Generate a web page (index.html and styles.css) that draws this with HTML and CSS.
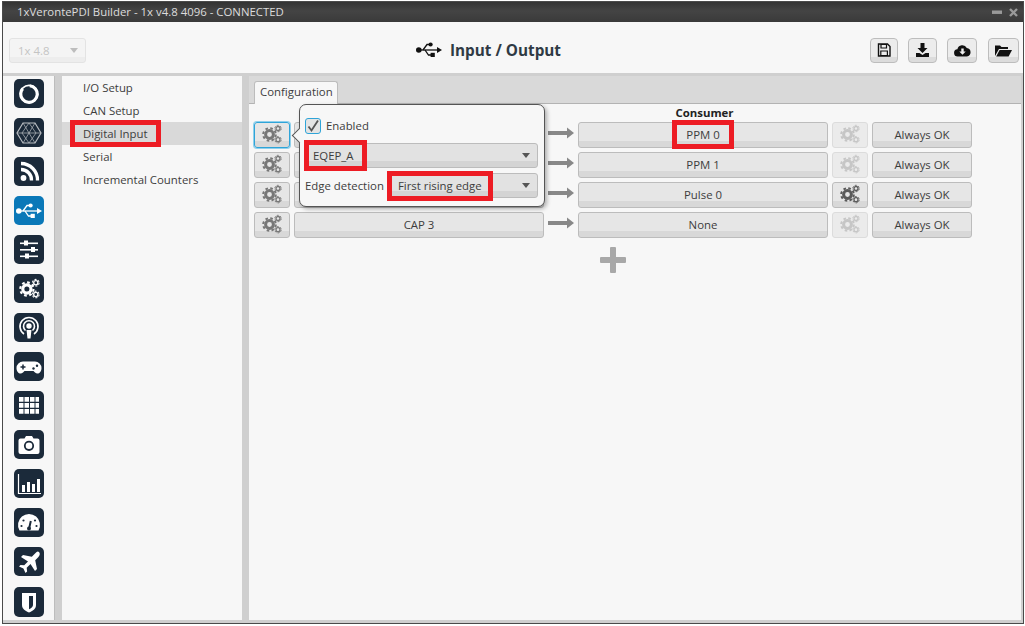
FILE: index.html
```html
<!DOCTYPE html>
<html lang="en">
<head>
<meta charset="utf-8">
<title>1xVerontePDI Builder</title>
<link rel="stylesheet" href="styles.css">
</head>
<body>
<svg class="defs" aria-hidden="true">
  <symbol id="cogs" viewBox="0 0 20 20">
    <g fill="none" stroke="currentColor">
      <circle cx="7.5" cy="10.500" r="3.900" stroke-width="3"/>
      <circle cx="7.5" cy="10.500" r="6.300" stroke-width="2" stroke-dasharray="2.600 2.350"/>
      <circle cx="16" cy="4.500" r="2" stroke-width="1.300"/>
      <circle cx="16" cy="4.500" r="3.200" stroke-width="1" stroke-dasharray="2 1.350"/>
      <circle cx="16" cy="15.700" r="2" stroke-width="1.300"/>
      <circle cx="16" cy="15.700" r="3.200" stroke-width="1" stroke-dasharray="2 1.350"/>
    </g>
  </symbol>
  <symbol id="usb" viewBox="0 0 26 16">
    <circle cx="2.8" cy="8" r="2.8" fill="currentColor"/>
    <path d="M3 8H22" stroke="currentColor" stroke-width="1.3" fill="none"/>
    <path d="M21 5l5 3-5 3z" fill="currentColor"/>
    <path d="M7 8L11 2.5H14M9 8l3.5 5H15" stroke="currentColor" stroke-width="1.3" fill="none"/>
    <circle cx="14.6" cy="2.5" r="2.1" fill="currentColor"/>
    <rect x="14.6" y="10.8" width="4.2" height="4.2" fill="currentColor"/>
  </symbol>
</svg>

<div class="window">
  <div class="titlebar">
    <span class="title-text">1xVerontePDI Builder - 1x v4.8 4096 - CONNECTED</span>
    <span class="win-controls">
      <svg class="win-icon" width="10" height="8" viewBox="0 0 10 8"><rect y="3" width="10" height="2.4"/></svg>
      <svg class="win-icon" width="9" height="9" viewBox="0 0 9 9"><path d="M1 1l7 7M8 1l-7 7" stroke-width="2.4"/></svg>
    </span>
  </div>

  <header class="header">
    <div class="combo"><span>1x 4.8</span><i class="caret caret-light"></i></div>
    <h1 class="page-title">
      <svg class="title-usb"><use href="#usb"/></svg>
      <span>Input / Output</span>
    </h1>
    <div class="tools">
      <button class="tool tool-a"><svg width="14" height="14" viewBox="0 0 14 14"><path d="M1.5 1h9l2.5 2.5V13H1.5z" fill="none" stroke="#111" stroke-width="1.4"/><path d="M4 1.5h5.5v3.5H4zM3.8 8h6.6v4.5H3.8z" fill="none" stroke="#111" stroke-width="1.2"/></svg></button>
      <button class="tool tool-b"><svg width="15" height="14" viewBox="0 0 15 14"><path d="M5.5 0h4v5h3l-5 5-5-5h3z" fill="#111"/><path d="M1 10h3.5l3 2 3-2H14v4H1z" fill="#111"/></svg></button>
      <button class="tool tool-c"><svg width="17" height="13" viewBox="0 0 17 13"><path d="M4 12.5a3.6 3.6 0 0 1-.6-7.2A5 5 0 0 1 12.8 4 4.3 4.3 0 0 1 13 12.5z" fill="#111"/><path d="M7.3 4.5h2.4v3h2l-3.2 3.3-3.2-3.3h2z" fill="#f0f0f0"/></svg></button>
      <button class="tool tool-d"><svg width="17" height="13" viewBox="0 0 17 13"><path d="M0 12V1.5h5l1.5 1.5H13v2H4L0 12z" fill="#111"/><path d="M4.6 6H17l-3.4 6.5H1.2z" fill="#111"/></svg></button>
    </div>
  </header>

  <div class="main">
    <nav class="rail">
      <a class="rail-btn"><svg viewBox="0 0 30 30"><g fill="none" stroke="#fff"><circle cx="15" cy="15" r="8.600" stroke-width="1.600"/><circle cx="15" cy="15" r="8.300" stroke-width="3.200" stroke-dasharray="44 8.200" transform="rotate(-85 15 15)"/></g></svg></a>
      <a class="rail-btn"><svg viewBox="0 0 30 30"><g fill="none" stroke="#b9bdc2" stroke-width=".7"><path d="M9 5h12l6 10-6 10H9L3 15z" stroke-width="1.200"/><path d="M9 5l12 20M21 5L9 25M3 15h24M8 15l7-10 7 10-7 10z"/></g></svg></a>
      <a class="rail-btn"><svg viewBox="0 0 30 30"><circle cx="9.500" cy="21" r="2.900" fill="#fff"/><path d="M7 12.500a10.500 10.500 0 0 1 10.500 11M7 6.500a16.500 16.500 0 0 1 16.500 17" fill="none" stroke="#fff" stroke-width="3.300"/></svg></a>
      <a class="rail-btn rail-active"><svg class="rail-usb"><use href="#usb"/></svg></a>
      <a class="rail-btn"><svg viewBox="0 0 30 30" fill="#fff"><rect x="6" y="7.500" width="18" height="1.600"/><rect x="6" y="14" width="18" height="1.600"/><rect x="6" y="20.500" width="18" height="1.600"/><rect x="10" y="5.500" width="4" height="5"/><rect x="17" y="12" width="4" height="5"/><rect x="11" y="18.500" width="4" height="5"/></svg></a>
      <a class="rail-btn rail-cogs"><svg><use href="#cogs"/></svg></a>
      <a class="rail-btn"><svg viewBox="0 0 30 30" fill="none" stroke="#fff"><path d="M10 21a9 9 0 1 1 10 0" stroke-width="1.600"/><path d="M11.500 17.500a5.500 5.500 0 1 1 7 0" stroke-width="1.600"/><circle cx="15" cy="13" r="2.700" fill="#fff" stroke="none"/><path d="M12.500 17h5l-1 8.500h-3z" fill="#fff" stroke="none"/></svg></a>
      <a class="rail-btn"><svg viewBox="0 0 30 30"><path d="M9 9.500h12a6.500 6.500 0 0 1 6.500 6.500c0 5-4 7-6.500 4.500L19.500 19h-9L9 20.500C6.500 23 2.500 21 2.500 16A6.500 6.500 0 0 1 9 9.500z" fill="#fff"/><path d="M9 12.500v5M6.500 15h5" stroke="#1b2a3a" stroke-width="1.500"/><circle cx="19.500" cy="16.500" r="1.200" fill="#1b2a3a"/><circle cx="23" cy="13.800" r="1.200" fill="#1b2a3a"/></svg></a>
      <a class="rail-btn"><svg viewBox="0 0 30 30" fill="#fff"><path d="M5 6h4.500v4.800H5zM10.500 6H15v4.800h-4.500zM16 6h4.500v4.800H16zM21.500 6H25v4.800h-3.500zM5 12h4.500v4.800H5zM10.500 12H15v4.800h-4.500zM16 12h4.500v4.800H16zM21.500 12H25v4.800h-3.500zM5 18h4.500v4.800H5zM10.500 18H15v4.800h-4.500zM16 18h4.500v4.800H16zM21.500 18H25v4.800h-3.500z"/></svg></a>
      <a class="rail-btn"><svg viewBox="0 0 30 30"><path d="M6.500 8.500h4l1.500-2.500h6l1.500 2.500h4a2 2 0 0 1 2 2V22a2 2 0 0 1-2 2h-17a2 2 0 0 1-2-2V10.500a2 2 0 0 1 2-2z" fill="#fff"/><circle cx="15" cy="15.800" r="4.200" fill="none" stroke="#1b2a3a" stroke-width="1.800"/></svg></a>
      <a class="rail-btn"><svg viewBox="0 0 30 30"><path d="M4.500 5v19.500H27" fill="none" stroke="#fff" stroke-width="1.200"/><path d="M8 16h3v7H8zM13 13h3v10h-3zM18 15h3v8h-3zM23 10h3v13h-3z" fill="#fff"/></svg></a>
      <a class="rail-btn"><svg viewBox="0 0 30 30"><path d="M5.500 22.500A11 11 0 1 1 24.500 22.500z" fill="#fff"/><path d="M15 21l1.800-8" stroke="#1b2a3a" stroke-width="2"/><circle cx="15" cy="20.500" r="2" fill="#1b2a3a"/><circle cx="7.500" cy="18" r="1.100" fill="#1b2a3a"/><circle cx="9.500" cy="12.500" r="1.100" fill="#1b2a3a"/><circle cx="21" cy="12.500" r="1.100" fill="#1b2a3a"/><circle cx="22.500" cy="18" r="1.100" fill="#1b2a3a"/></svg></a>
      <a class="rail-btn"><svg viewBox="0 0 30 30"><path d="M25 5c1.500 1.500.6 3.800-.8 5.200l-3 3L23 22l-2 2-4.500-7-3.800 3.800.4 3.700-1.600 1.500-2.100-4.400-4.400-2.100 1.500-1.600 3.700.4L14 14.500 7 10l2-2 8.800 1.800 3-3C22.200 5.400 23.500 3.500 25 5z" fill="#fff"/></svg></a>
      <a class="rail-btn rail-last"><svg viewBox="0 0 30 30"><path d="M8 6h14v12c0 4-3.500 6-7 7.500-3.500-1.500-7-3.500-7-7.500z" fill="#fff"/><path d="M15 9h4v9c0 2-2 3.300-4 4.200z" fill="#1b2a3a"/></svg></a>
    </nav>

    <aside class="side">
      <a class="side-item">I/O Setup</a>
      <a class="side-item">CAN Setup</a>
      <a class="side-item side-selected"><span class="mark mark-nav">Digital Input</span></a>
      <a class="side-item">Serial</a>
      <a class="side-item">Incremental Counters</a>
    </aside>

    <section class="content">
      <div class="tabs"><div class="tab">Configuration</div></div>
      <div class="panel">
        <div class="grid">
          <div class="consumer-head">Consumer</div>

          <button class="btn gear-btn gear-focus row-start"><svg><use href="#cogs"/></svg></button>
          <button class="btn"></button>
          <svg class="arrow" viewBox="0 0 26 12"><path d="M0 4h19V.5L26 6l-7 5.500V8H0z"/></svg>
          <button class="btn"><span class="mark mark-ppm">PPM 0</span></button>
          <button class="btn gear-btn gear-off"><svg><use href="#cogs"/></svg></button>
          <button class="btn">Always OK</button>

          <button class="btn gear-btn row-start"><svg><use href="#cogs"/></svg></button>
          <button class="btn"></button>
          <svg class="arrow" viewBox="0 0 26 12"><path d="M0 4h19V.5L26 6l-7 5.500V8H0z"/></svg>
          <button class="btn">PPM 1</button>
          <button class="btn gear-btn gear-off"><svg><use href="#cogs"/></svg></button>
          <button class="btn">Always OK</button>

          <button class="btn gear-btn row-start"><svg><use href="#cogs"/></svg></button>
          <button class="btn"></button>
          <svg class="arrow" viewBox="0 0 26 12"><path d="M0 4h19V.5L26 6l-7 5.500V8H0z"/></svg>
          <button class="btn">Pulse 0</button>
          <button class="btn gear-btn gear-on"><svg><use href="#cogs"/></svg></button>
          <button class="btn">Always OK</button>

          <button class="btn gear-btn row-start"><svg><use href="#cogs"/></svg></button>
          <button class="btn">CAP 3</button>
          <svg class="arrow" viewBox="0 0 26 12"><path d="M0 4h19V.5L26 6l-7 5.500V8H0z"/></svg>
          <button class="btn">None</button>
          <button class="btn gear-btn gear-off"><svg><use href="#cogs"/></svg></button>
          <button class="btn">Always OK</button>

          <svg class="plus" viewBox="0 0 26 26"><path d="M10 1a1 1 0 0 1 1-1h4a1 1 0 0 1 1 1v9h9a1 1 0 0 1 1 1v4a1 1 0 0 1-1 1h-9v9a1 1 0 0 1-1 1h-4a1 1 0 0 1-1-1v-9H1a1 1 0 0 1-1-1v-4a1 1 0 0 1 1-1h9z"/></svg>
        </div>

        <div class="popover">
          <label class="check-row">
            <span class="check"><svg width="14" height="14" viewBox="0 0 14 14"><path d="M2.500 7.500l3 4L12 1.500" fill="none" stroke="#555" stroke-width="1.800"/></svg></span>
            <span>Enabled</span>
          </label>
          <div class="select"><span class="mark mark-eqep">EQEP_A</span><i class="caret"></i></div>
          <div class="edge-row">
            <span>Edge detection</span>
            <div class="select select-edge"><span class="mark mark-edge">First rising edge</span><i class="caret"></i></div>
          </div>
        </div>
      </div>
    </section>
  </div>
</div>
</body>
</html>
```

FILE: styles.css
```css
* { box-sizing: border-box; }
html, body { margin: 0; padding: 0; background: #fff; }
body {
  font-family: "Open Sans", "Liberation Sans", sans-serif;
  font-size: 11.4px;
  color: #3d3d3d;
  overflow: hidden;
}
.defs { width: 0; height: 0; position: absolute; }

.window {
  width: 1022px;
  height: 623px;
  margin: 1px 0 0 2px;
  border: 1px solid #4a4a4a;
  display: flex;
  flex-direction: column;
}

.titlebar {
  height: 20px;
  flex: none;
  background: linear-gradient(#333 0, #444 45%, #3a3a3a 100%);
  color: #dcdcdc;
  padding: 0 5px 0 14px;
  display: flex;
  align-items: center;
  justify-content: space-between;
  line-height: 20px;
}
.win-controls { display: flex; align-items: center; gap: 7px; }
.win-icon { fill: #9a9a9a; stroke: #9a9a9a; display: block; }

.header {
  height: 51px;
  flex: none;
  background: #f7f7f7;
  display: flex;
  align-items: center;
  position: relative;
  padding: 5px 4px 0 6px;
}
.combo {
  width: 77px;
  height: 25px;
  border: 1px solid #e3e3e3;
  border-radius: 3px;
  background: linear-gradient(#f4f4f4 80%, #ededed 80%);
  color: #c4c4c4;
  display: flex;
  align-items: center;
  justify-content: space-between;
  padding: 0 7px 0 8px;
}
.caret {
  width: 0; height: 0;
  border-left: 4.500px solid transparent;
  border-right: 4.500px solid transparent;
  border-top: 5px solid #555;
  flex: none;
}
.caret-light { border-top-color: #bdbdbd; }
.page-title {
  flex: 1;
  margin: 0;
  font-size: 15.300px;
  font-weight: 700;
  color: #2f3a44;
  display: flex;
  align-items: center;
  justify-content: center;
  gap: 8px;
  padding-left: 21px;
}
.title-usb { width: 26px; height: 16px; color: #111; }
.tools { display: flex; }
.tool {
  width: 29px;
  height: 25px;
  padding: 0;
  border: 1px solid #bdbdbd;
  border-radius: 4px;
  background: linear-gradient(#ececec 78%, #dcdcdc 78%);
  display: flex;
  align-items: center;
  justify-content: center;
  margin-left: 10px;
}
.tool-a { width: 28px; margin-left: 0; }
.tool-c { width: 30px; }
.tool-d { width: 31px; margin-left: 11px; }

.main {
  flex: 1;
  min-height: 0;
  display: flex;
  background: #cfcfcf;
  border-top: 3px solid #cfcfcf;
  border-bottom: 3px solid #cfcfcf;
  border-right: 2px solid #cfcfcf;
}
.rail {
  width: 52px;
  flex: none;
  background: #f7f7f7;
  border-right: 1px solid #bdbdbd;
  padding: 3px 0 0 11px;
  display: flex;
  flex-direction: column;
  gap: 10px;
}
.rail-btn {
  width: 30px;
  height: 29px;
  flex: none;
  background: #1b2a3a;
  border-radius: 5px;
  display: flex;
  align-items: center;
  justify-content: center;
  color: #fff;
}
.rail-btn svg { width: 30px; height: 30px; display: block; }
.rail-active { background: #0a78b8; }
.rail-btn .rail-usb { width: 26px; height: 16px; }
.rail-cogs svg { width: 21px; height: 21px; }
.rail-last { height: 30px; margin-top: 1px; }

.side {
  width: 180px;
  flex: none;
  margin-left: 7px;
  background: #f7f7f7;
  display: flex;
  flex-direction: column;
}
.side-item {
  height: 23px;
  line-height: 23px;
  padding-left: 21px;
  flex: none;
}
.side-selected { background: #d9d9d9; }

.content {
  flex: 1;
  min-width: 0;
  margin-left: 7px;
  display: flex;
  flex-direction: column;
  background: #f7f7f7;
}
.tabs {
  height: 28px;
  flex: none;
  background: #d9d9d9;
  border-bottom: 1px solid #b3b3b3;
  padding: 5px 0 0 5px;
}
.tab {
  width: 84px;
  height: 23px;
  background: #f7f7f7;
  border: 1px solid #bcbcbc;
  border-bottom: 0;
  border-radius: 3px 3px 0 0;
  line-height: 20px;
  padding-left: 5px;
}
.panel { flex: 1; position: relative; padding: 0 0 0 5px; }

.grid {
  display: grid;
  width: 718px;
  grid-template-columns: 36px 250px 26px 250px 36px 100px;
  grid-template-rows: 18px;
  grid-auto-rows: 30px;
  column-gap: 4px;
  align-items: start;
}
.consumer-head {
  grid-column: 4;
  line-height: 18px;
  text-align: center;
  font-weight: 700;
  color: #222;
  padding-left: 3px;
}
.row-start { grid-column: 1; }
.btn {
  height: 26px;
  padding: 0 0 2px;
  font: inherit;
  color: #3d3d3d;
  border: 1px solid #bcbcbc;
  border-radius: 3px;
  background: linear-gradient(#e6e6e6 76%, #d8d8d8 76%);
  display: flex;
  align-items: center;
  justify-content: center;
}
.gear-btn { color: #777; }
.gear-btn svg { width: 20px; height: 20px; display: block; }
.gear-focus { border-color: #2fa4d8; box-shadow: 0 0 0 1px #8fd0ec; }
.gear-off { color: #c6c6c6; background: #ebebeb; border-color: #dcdcdc; }
.gear-on { color: #5a5a5a; }
.arrow { width: 26px; height: 12px; margin-top: 5px; fill: #888; }
.plus {
  grid-column: 1 / -1;
  justify-self: center;
  width: 26px;
  height: 26px;
  fill: #a8a8a8;
  margin-top: 5px;
}

.mark { outline: 5px solid #ed1c24; position: relative; }
.mark-nav { padding: 0 8px; margin-left: -8px; display: inline-block; height: 17px; line-height: 17px; }
.mark-ppm { padding: 0 9px; display: inline-block; height: 19px; line-height: 19px; }
.mark-eqep { padding: 0 8px 0 4px; display: inline-block; height: 21px; line-height: 21px; margin-left: -4px; }
.mark-edge { padding: 0 6px; display: inline-block; height: 20px; line-height: 20px; margin-left: -6px; }

.popover {
  position: absolute;
  left: 50px;
  top: 0;
  width: 246px;
  height: 103px;
  background: #f7f7f7;
  border: 1px solid #555;
  border-radius: 7px;
  box-shadow: 2px 2px 4px rgba(0,0,0,.3);
  padding: 12px 6px 0 5px;
  display: flex;
  flex-direction: column;
}
.popover::before {
  content: "";
  position: absolute;
  left: -6px;
  top: 25px;
  width: 10px;
  height: 10px;
  background: #f7f7f7;
  border-left: 1px solid #555;
  border-bottom: 1px solid #555;
  transform: rotate(45deg);
}
.check-row { display: flex; align-items: center; gap: 5px; height: 17px; }
.check {
  width: 16px;
  height: 16px;
  border: 1px solid #2fa4d8;
  border-radius: 3px;
  background: #e4e4e4;
  display: flex;
  align-items: center;
  justify-content: center;
}
.select {
  height: 25px;
  margin-top: 9px;
  border: 1px solid #bcbcbc;
  border-radius: 3px;
  background: linear-gradient(#e2e2e2 76%, #d4d4d4 76%);
  display: flex;
  align-items: center;
  justify-content: space-between;
  padding: 0 7px 0 7px;
}
.edge-row { display: flex; align-items: center; gap: 6px; margin-top: 5px; }
.edge-row .select { margin-top: 0; flex: 1; }
```
